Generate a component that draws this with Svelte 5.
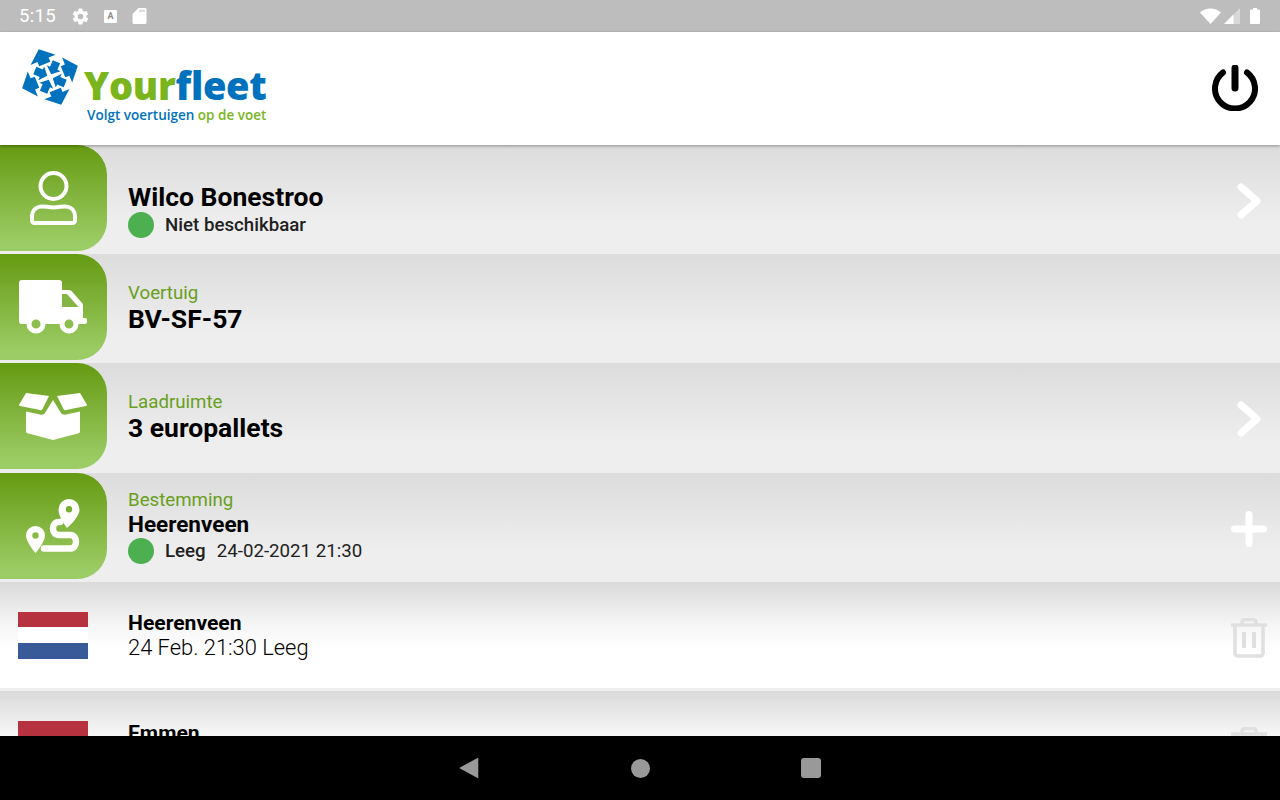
<script>
	const listItems = [
		{ city: 'Heerenveen', detail: '24 Feb. 21:30 Leeg' },
		{ city: 'Emmen', detail: '' }
	];
</script>

<div class="screen">
	<div class="statusbar">
		<div class="status-left">
			<span class="clock">5:15</span>
			<svg class="st-gear" viewBox="0 0 24 24"><path d="M19.4 13c.04-.33.1-.66.1-1s-.06-.67-.1-1l2.1-1.65c.2-.15.25-.42.13-.64l-2-3.46c-.12-.22-.4-.3-.6-.22l-2.5 1c-.5-.4-1.08-.72-1.7-.98l-.37-2.65A.5.5 0 0 0 14 2h-4a.5.5 0 0 0-.5.42l-.37 2.65c-.62.26-1.18.58-1.7.98l-2.5-1a.5.5 0 0 0-.6.22l-2 3.46c-.13.22-.07.49.12.64L4.6 11c-.04.33-.1.66-.1 1s.06.67.1 1l-2.1 1.65c-.2.15-.25.42-.13.64l2 3.46c.12.22.4.3.6.22l2.5-1c.52.4 1.08.72 1.7.98l.37 2.65c.04.24.25.42.5.42h4c.25 0 .46-.18.5-.42l.37-2.65c.62-.26 1.2-.58 1.7-.98l2.5 1c.22.08.48 0 .6-.22l2-3.46a.5.5 0 0 0-.12-.64zM12 15.5a3.5 3.5 0 1 1 0-7 3.5 3.5 0 0 1 0 7z" fill="#fff"/></svg>
			<span class="st-a">A</span>
			<svg class="st-sd" viewBox="0 0 14 16"><path d="M6 0h6.5A1.5 1.5 0 0 1 14 1.500v13a1.500 1.500 0 0 1-1.500 1.500h-11A1.500 1.500 0 0 1 0 14.500V6z" fill="#fff"/><path d="M7.500 1.500v2.500M9.500 1.500v2.500M11.500 1.500v2.500" stroke="#bdbdbd" stroke-width="1"/></svg>
		</div>
		<div class="status-right">
			<svg width="21" height="16" viewBox="0 0 21 16"><path d="M0 4.500C3 1.800 6.500.5 10.500.5S18 1.800 21 4.500L10.500 16z" fill="#fff"/></svg>
			<svg width="16" height="16" viewBox="0 0 16 16"><path d="M0 16L16 0v16z" fill="#d8d8d8"/><path d="M0 16L9.500 6.500V16z" fill="#fff"/></svg>
			<svg class="st-batt" width="10" height="16" viewBox="0 0 10 16"><path d="M3 0h4v1.500h2a1 1 0 0 1 1 1V15a1 1 0 0 1-1 1H1a1 1 0 0 1-1-1V2.500a1 1 0 0 1 1-1h2z" fill="#fff"/></svg>
		</div>
	</div>

	<header class="header">
		<div class="logo">
			<svg class="logo-mark" width="60" height="60" viewBox="-30 -30 60 60">
				<g transform="rotate(23)" fill="#0071bc">
					{#each [0, 90, 180, 270] as a}
						<g transform="rotate({a})">
							<path d="M0 -3L7.500 -9.500H4V-16.500H-4V-9.500H-7.500z" />
							<path transform="rotate(45)" d="M0 -30L13.500 -18.500H6V-14H-6V-18.500H-13.500z" />
						</g>
					{/each}
				</g>
			</svg>
			<div class="wordmark">
				<div class="brand"><span class="green">Your</span><span class="blue">fleet</span></div>
				<div class="slogan"><span class="blue">Volgt voertuigen</span> <span class="green">op de voet</span></div>
			</div>
		</div>
		<svg class="power" width="46" height="46" viewBox="0 0 46 46" fill="none" stroke="#000" stroke-linecap="round">
			<path d="M11 7.500A20 20 0 1 0 35 7.500" stroke-width="6" />
			<path d="M23 3V23" stroke-width="7" />
		</svg>
	</header>

	<main class="content">
		<section class="row">
			<div class="tile">
				<svg width="47" height="54" viewBox="0 0 47 54" fill="none" stroke="#fff" stroke-width="4">
					<circle cx="23.500" cy="15" r="13" />
					<path d="M8.500 36C13 34.200 17 36.500 23.500 36.500S34 34.200 38.500 36C42.500 37.500 45 41 45 45V49.500A2.500 2.500 0 0 1 42.500 52H4.500A2.500 2.500 0 0 1 2 49.500V45C2 41 4.500 37.500 8.500 36z" stroke-linejoin="round" />
				</svg>
			</div>
			<div class="info first">
				<div class="title large">Wilco Bonestroo</div>
				<div class="state"><span class="dot"></span><b>Niet beschikbaar</b></div>
			</div>
			<svg class="action chev" width="24" height="36" viewBox="0 0 24 36" fill="none" stroke="#fff" stroke-width="7" stroke-linecap="round" stroke-linejoin="round"><path d="M4 4L20 18L4 32" /></svg>
		</section>

		<section class="row">
			<div class="tile">
				<svg width="68" height="54" viewBox="0 0 68 54">
					<path fill="#fff" d="M3 0H40A3 3 0 0 1 43 3V10H49C51 10 52 10.500 53 11.500L63 23C64 24 64 25 64 26V38H66A2 2 0 0 1 68 40V42A2 2 0 0 1 66 44H7L3 44A3 3 0 0 1 0 41V3A3 3 0 0 1 3 0z" />
					<path fill="#84b545" d="M43 14H48L59.500 27H43z" />
					<circle cx="17" cy="44" r="7" fill="#8dbd4e" stroke="#fff" stroke-width="5" />
					<circle cx="50" cy="44" r="7" fill="#8dbd4e" stroke="#fff" stroke-width="5" />
				</svg>
			</div>
			<div class="info">
				<div class="label">Voertuig</div>
				<div class="title large">BV-SF-57</div>
			</div>
		</section>

		<section class="row">
			<div class="tile">
				<svg width="68" height="48" viewBox="0 0 68 48" fill="#fff">
					<path d="M7 1L30 4L23.500 17C23 18 22 18.500 21 18L1 14C0 13.500 -.3 13 .5 12z" />
					<path d="M61 1L38 4L44.500 17C45 18 46 18.500 47 18L67 14C68 13.500 68.300 13 67.500 12z" />
					<path d="M34 8L42 21C43 22.500 45 23 47 22.500L61 19.500V39C61 40 60.500 41 59.500 41.300L34 48L8.500 41.300C7.500 41 7 40 7 39V19.500L21 22.500C23 23 25 22.500 26 21z" />
				</svg>
			</div>
			<div class="info">
				<div class="label">Laadruimte</div>
				<div class="title large">3 europallets</div>
			</div>
			<svg class="action chev" width="24" height="36" viewBox="0 0 24 36" fill="none" stroke="#fff" stroke-width="7" stroke-linecap="round" stroke-linejoin="round"><path d="M4 4L20 18L4 32" /></svg>
		</section>

		<section class="row">
			<div class="tile">
				<svg width="54" height="54" viewBox="0 0 54 54">
					<path fill="#fff" fill-rule="evenodd" d="M43 0A10.500 10.500 0 0 1 53.500 10.500C53.500 16 47 24 41 29C37 24 32.500 16 32.500 10.500A10.500 10.500 0 0 1 43 0zM43 7A3.200 3.200 0 1 0 43 13.400A3.200 3.200 0 0 0 43 7z" />
					<path fill="#fff" fill-rule="evenodd" d="M9.500 27A9.500 9.500 0 0 1 19 36.500C19 41 14 49 9.500 54C5 49 0 41 0 36.500A9.500 9.500 0 0 1 9.500 27zM9.500 33.300A3.200 3.200 0 1 0 9.500 39.700A3.200 3.200 0 0 0 9.500 33.300z" />
					<path fill="none" stroke="#fff" stroke-width="6.500" stroke-linecap="round" d="M34 23H33C25 23 25 36 33 36H44C52 36 52 49.500 44 49.500H18" />
				</svg>
			</div>
			<div class="info">
				<div class="label">Bestemming</div>
				<div class="title">Heerenveen</div>
				<div class="state"><span class="dot"></span><b>Leeg</b><span class="date">24-02-2021 21:30</span></div>
			</div>
			<svg class="action" width="36" height="36" viewBox="0 0 36 36" fill="none" stroke="#fff" stroke-width="7" stroke-linecap="round"><path d="M18 3.500V32.500M3.500 18H32.500" /></svg>
		</section>

		{#each listItems as item}
			<section class="stop">
				<div class="flag"><i class="red"></i><i class="white"></i><i class="dutch-blue"></i></div>
				<div class="info">
					<div class="title small">{item.city}</div>
					<div class="detail">{item.detail}</div>
				</div>
				<svg class="action" width="36" height="40" viewBox="0 0 36 40" fill="none" stroke="#e0e0e0" stroke-width="3.600">
					<path d="M0 7H36" stroke-width="3.400" />
					<path d="M11 6V4A3 3 0 0 1 14 1.500H22A3 3 0 0 1 25 4V6" />
					<path d="M4 8V35A3 3 0 0 0 7 38H29A3 3 0 0 0 32 35V8" />
					<path d="M13 14V30M23 14V30" stroke-width="4" />
				</svg>
			</section>
		{/each}
	</main>

	<nav class="navbar">
		<svg width="20" height="22" viewBox="0 0 20 22"><path d="M18.500 1L1 10.500A.6 .6 0 0 0 1 11.500L18.500 21C19 21.300 19.300 21 19.300 20.500V1.500C19.300 1 19 .7 18.500 1z" fill="#999" /></svg>
		<span class="nav-home"></span>
		<span class="nav-recent"></span>
	</nav>
</div>

<style>
	:global(body) {
		margin: 0;
		background: #000;
	}

	.screen {
		width: 1280px;
		height: 800px;
		display: flex;
		flex-direction: column;
		overflow: hidden;
		font-family: Roboto, "Liberation Sans", sans-serif;
		background: #fff;
	}

	.statusbar {
		height: 32px;
		flex: none;
		background: #bdbdbd;
		display: flex;
		justify-content: space-between;
		align-items: center;
		color: #fff;
	}

	.status-left {
		display: flex;
		align-items: center;
		padding-left: 19px;
	}

	.clock {
		font-size: 18.500px;
		letter-spacing: 0.3px;
		width: 52px;
	}

	.st-gear {
		width: 19px;
		height: 19px;
	}

	.st-a {
		width: 13px;
		height: 13px;
		margin-left: 14px;
		background: #fff;
		color: #8c8c8c;
		font-size: 9px;
		font-weight: 700;
		line-height: 13px;
		text-align: center;
		border-radius: 1px;
	}

	.st-sd {
		width: 15px;
		height: 16px;
		margin-left: 15px;
	}

	.status-right {
		display: flex;
		align-items: center;
		gap: 3px;
		padding-right: 20px;
	}

	.st-batt {
		margin-left: 7px;
	}

	.header {
		height: 113px;
		flex: none;
		display: flex;
		justify-content: space-between;
		align-items: center;
		padding: 0 22px;
		position: relative;
		z-index: 2;
		box-shadow: 0 1px 3px rgba(0, 0, 0, 0.35);
		background: #fff;
	}

	.logo {
		display: flex;
		align-items: flex-start;
		height: 113px;
	}

	.logo-mark {
		margin-top: 15px;
		margin-left: -2px;
		flex: none;
	}

	.wordmark {
		margin-left: 4px;
		margin-top: 31px;
	}

	.brand {
		font-family: "Open Sans", sans-serif;
		font-weight: 800;
		font-size: 38px;
		line-height: 44px;
		letter-spacing: -0.3px;
		white-space: nowrap;
	}

	.slogan {
		font-family: "Open Sans", sans-serif;
		font-weight: 600;
		font-size: 13.500px;
		line-height: 14px;
		margin-left: 3px;
		margin-top: 1px;
		white-space: nowrap;
	}

	.green {
		color: #7ab51d;
	}

	.blue {
		color: #0071bc;
	}

	.power {
		margin-right: 0;
		margin-top: -2px;
	}

	.content {
		flex: 1;
		min-height: 0;
		overflow: hidden;
	}

	.row {
		height: 109.200px;
		display: flex;
		align-items: flex-start;
		background: linear-gradient(#dcdcdc, #eeeeee 72%);
		position: relative;
	}

	.tile {
		width: 106.500px;
		height: 106px;
		flex: none;
		border-radius: 0 30px 30px 0;
		background: linear-gradient(#659a12, #9ccc65 92%);
		display: flex;
		align-items: center;
		justify-content: center;
	}

	.info {
		margin-left: 21.500px;
		height: 100%;
		display: flex;
		flex-direction: column;
		justify-content: center;
		padding-bottom: 2px;
		box-sizing: border-box;
	}

	.info.first {
		padding-top: 20px;
		padding-bottom: 0;
	}

	.label {
		color: #689f1c;
		font-size: 18.700px;
		line-height: 22px;
	}

	.title {
		color: #000;
		font-size: 22.500px;
		line-height: 27px;
		font-weight: 700;
	}

	.title.large {
		font-size: 26.500px;
		line-height: 30px;
	}

	.title.small {
		font-size: 21.100px;
		line-height: 25px;
	}

	.state {
		display: flex;
		align-items: center;
		height: 26px;
		color: #212121;
		font-size: 18.700px;
	}

	.state b {
		font-weight: 500;
	}

	.dot {
		width: 26px;
		height: 26px;
		border-radius: 50%;
		background: #4caf50;
		margin-right: 11px;
	}

	.date {
		margin-left: 11px;
	}

	.action {
		position: absolute;
		right: 13px;
		top: 56px;
		transform: translateY(-50%);
	}

	.action.chev {
		right: 19px;
	}

	.stop {
		height: 109.200px;
		display: flex;
		align-items: flex-start;
		position: relative;
		background: linear-gradient(#dadada, #f6f6f6 40%, #ffffff 62%, #ffffff 97%, #eeeeee 97%);
	}

	.flag {
		width: 70px;
		height: 47px;
		margin: 30px 0 0 18px;
		display: flex;
		flex-direction: column;
		flex: none;
	}

	.flag i {
		display: block;
		flex: 1;
	}

	.red {
		background: #b5323e;
	}

	.white {
		background: #fff;
	}

	.dutch-blue {
		background: #385a98;
	}

	.stop .info {
		margin-left: 40px;
		padding-bottom: 2px;
	}

	.detail {
		color: #000;
		font-size: 21.900px;
		line-height: 25px;
		min-height: 25px;
		font-weight: 300;
	}

	.navbar {
		height: 64px;
		flex: none;
		background: #000;
		display: flex;
		align-items: center;
		justify-content: center;
		gap: 152px;
		position: relative;
		z-index: 2;
	}

	.nav-home {
		width: 19px;
		height: 19px;
		border-radius: 50%;
		background: #999;
	}

	.nav-recent {
		width: 20px;
		height: 20px;
		margin-left: -1.500px;
		border-radius: 3px;
		background: #999;
	}
</style>
